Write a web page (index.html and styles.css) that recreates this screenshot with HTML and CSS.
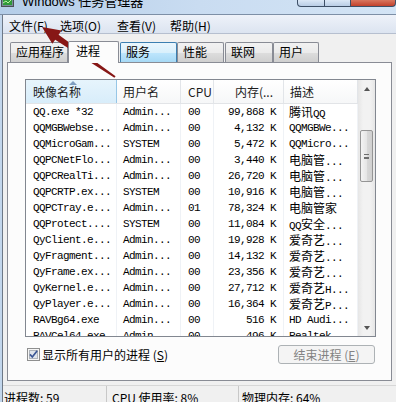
FILE: index.html
```html
<!DOCTYPE html>
<html lang="zh-CN">
<head>
  <meta charset="UTF-8">
  <title>Windows 任务管理器</title>
  <link rel="stylesheet" href="styles.css">
</head>
<body>
  <div class="window">
    <div class="titlebar">
      <svg class="app-icon" width="14" height="8" viewBox="0 0 14 8">
        <rect x="0.5" y="-3.5" width="12" height="10" fill="#7a8a99" stroke="#4a4f55"/>
        <rect x="2" y="-2" width="9" height="7" fill="#2f9a3a"/>
        <path d="M2 3 L5 1 L7 3 L11 -1" stroke="#b8f0a0" fill="none"/>
      </svg>
      <span class="title">Windows 任务管理器</span>
      <div class="caption-buttons">
        <span class="cap-btn cap-min"></span>
        <span class="cap-btn cap-max"></span>
        <span class="cap-btn cap-close"></span>
      </div>
    </div>

    <div class="frame">
      <div class="inner">
        <div class="menubar">
          <span class="menu-item m1">文件(F)</span>
          <span class="menu-item m2">选项(O)</span>
          <span class="menu-item m3">查看(V)</span>
          <span class="menu-item">帮助(H)</span>
        </div>

        <div class="client">
          <div class="tabs">
            <div class="tab t-apps">应用程序</div>
            <div class="tab active t-proc">进程</div>
            <div class="tab hot t-svc">服务</div>
            <div class="tab t-perf">性能</div>
            <div class="tab t-net">联网</div>
            <div class="tab t-user">用户</div>
          </div>

          <div class="panel">
            <div class="listview">
              <div class="list-body">
                <div class="list-header">
                  <div class="hcell sorted">映像名称<span class="sort-arrow"></span></div>
                  <div class="hcell">用户名</div>
                  <div class="hcell">CPU</div>
                  <div class="hcell num">内存(...</div>
                  <div class="hcell">描述</div>
                </div>
                <div class="rows">
                  <div class="row"><span>QQ.exe *32</span><span>Admin...</span><span>00</span><span>99,868 K</span><span><span class="cn">腾讯</span>QQ</span></div>
                  <div class="row"><span>QQMGBWebse...</span><span>Admin...</span><span>00</span><span>4,132 K</span><span>QQMGBWe...</span></div>
                  <div class="row"><span>QQMicroGam...</span><span>SYSTEM</span><span>00</span><span>5,472 K</span><span>QQMicro...</span></div>
                  <div class="row"><span>QQPCNetFlo...</span><span>Admin...</span><span>00</span><span>3,440 K</span><span><span class="cn">电脑管</span>...</span></div>
                  <div class="row"><span>QQPCRealTi...</span><span>Admin...</span><span>00</span><span>26,720 K</span><span><span class="cn">电脑管</span>...</span></div>
                  <div class="row"><span>QQPCRTP.ex...</span><span>SYSTEM</span><span>00</span><span>10,916 K</span><span><span class="cn">电脑管</span>...</span></div>
                  <div class="row"><span>QQPCTray.e...</span><span>Admin...</span><span>01</span><span>78,324 K</span><span><span class="cn">电脑管家</span></span></div>
                  <div class="row"><span>QQProtect....</span><span>SYSTEM</span><span>00</span><span>11,084 K</span><span>QQ<span class="cn">安全</span>...</span></div>
                  <div class="row"><span>QyClient.e...</span><span>Admin...</span><span>00</span><span>19,928 K</span><span><span class="cn">爱奇艺</span>...</span></div>
                  <div class="row"><span>QyFragment...</span><span>Admin...</span><span>00</span><span>14,132 K</span><span><span class="cn">爱奇艺</span>...</span></div>
                  <div class="row"><span>QyFrame.ex...</span><span>Admin...</span><span>00</span><span>23,356 K</span><span><span class="cn">爱奇艺</span>...</span></div>
                  <div class="row"><span>QyKernel.e...</span><span>Admin...</span><span>00</span><span>27,712 K</span><span><span class="cn">爱奇艺</span>H...</span></div>
                  <div class="row"><span>QyPlayer.e...</span><span>Admin...</span><span>00</span><span>16,364 K</span><span><span class="cn">爱奇艺</span>P...</span></div>
                  <div class="row"><span>RAVBg64.exe</span><span>Admin...</span><span>00</span><span>516 K</span><span>HD Audi...</span></div>
                  <div class="row"><span>RAVCel64.exe</span><span>Admin...</span><span>00</span><span>496 K</span><span>Realtek...</span></div>
                </div>
              </div>
              <div class="scrollbar">
                <div class="sb-btn"><span class="arr-up"></span></div>
                <div class="sb-track">
                  <div class="sb-thumb"><span class="grip"></span></div>
                </div>
                <div class="sb-btn"><span class="arr-down"></span></div>
              </div>
            </div>

            <div class="panel-foot">
              <label class="show-all">
                <svg width="13" height="13" viewBox="0 0 13 13">
                  <rect x="0.5" y="0.5" width="12" height="12" fill="#f6f6f6" stroke="#8e8f8f"/>
                  <rect x="2.5" y="2.5" width="8" height="8" fill="#dfe5ec" stroke="#aeb4bb"/>
                  <path d="M3 6.4 L5.3 9 L10.2 2.8" fill="none" stroke="#3b5795" stroke-width="1.7"/>
                </svg>
                <span>显示所有用户的进程 (<u>S</u>)</span>
              </label>
              <button class="end-btn" disabled>结束进程 (<u>E</u>)</button>
            </div>
          </div>
        </div>

        <div class="statusbar">
          <div class="pane p1">进程数: 59</div>
          <div class="pane p2">CPU 使用率: 8%</div>
          <div class="pane p3">物理内存: 64%</div>
        </div>
      </div>
    </div>

    <svg class="pointer-arrow" width="130" height="90" viewBox="0 0 130 90">
      <polygon points="42,27 61.4,30.6 58.6,34.7 115.6,76.2 114.4,77.8 55.2,39.7 52.3,43.8" fill="#871716"/>
    </svg>
  </div>
</body>
</html>
```

FILE: styles.css
```css
body {
  margin: 0;
  font-family: "Noto Sans CJK SC", "Liberation Sans", sans-serif;
  font-size: 12px;
  color: #000;
}

.window {
  position: relative;
  width: 396px;
  height: 402px;
  overflow: hidden;
  background: #c2d6ec;
}

/* title bar */
.titlebar {
  height: 14px;
  display: flex;
  align-items: flex-start;
  background: linear-gradient(to right, #b4cde8, #c9dcf1 50%, #d3e4f5);
  border-bottom: 1px solid #7d8fa6;
}

.app-icon {
  margin: 0 7px 0 1px;
  flex: none;
}

.title {
  font-family: "Liberation Sans", "Noto Sans CJK SC", sans-serif;
  font-size: 13px;
  line-height: 16px;
  margin-top: -6px;
  white-space: nowrap;
}

.caption-buttons {
  margin-left: auto;
  display: flex;
  height: 7px;
}

.cap-btn {
  display: block;
  height: 7px;
  box-sizing: border-box;
  border: 1px solid #3d4f66;
  border-top: none;
}

.cap-min {
  width: 28px;
  border-radius: 0 0 0 4px;
  background: linear-gradient(#dbe8f6, #b9cde5);
}

.cap-max {
  width: 26px;
  border-left: none;
  background: linear-gradient(#dbe8f6, #b9cde5);
}

.cap-close {
  width: 45px;
  border-left: none;
  border-radius: 0 0 4px 0;
  background: linear-gradient(#d8765f, #c2412c);
}

/* frame */
.frame {
  padding-left: 2px;
}

.inner {
  border-left: 1px solid #6d7886;
  background: #f0f0f0;
  height: 387px;
}

.menubar {
  height: 19px;
  box-sizing: border-box;
  padding: 3px 0 0 6px;
  display: flex;
  line-height: 16px;
  background: linear-gradient(#eef2f9, #dce4f0);
  border-bottom: 1px solid #b6bfcf;
}

.menu-item { white-space: nowrap; }
.m1 { width: 51px; }
.m2 { width: 57px; }
.m3 { width: 53px; }

/* tabs */
.client {
  height: 351px;
  box-sizing: border-box;
  padding: 7px 0 0 4px;
}

.tabs {
  display: flex;
  align-items: flex-end;
  height: 22px;
  margin: 0 0 -1px 3px;
}

.tab {
  height: 20px;
  margin-bottom: 1px;
  box-sizing: border-box;
  padding-left: 5px;
  line-height: 18px;
  border: 1px solid #898c95;
  border-bottom: none;
  border-radius: 2px 2px 0 0;
  background: linear-gradient(#f2f2f2, #ebebeb 50%, #dddddd 51%, #cfcfcf);
  white-space: nowrap;
}

.tab.active {
  position: relative;
  z-index: 1;
  height: 22px;
  margin-bottom: 0;
  padding-left: 7px;
  background: #fcfcfc;
}

.tab.hot {
  border-color: #3c7fb1;
  background: linear-gradient(#eaf6fd, #d9f0fc 50%, #bee6fd 51%, #a7d9f5);
}

.t-apps { width: 58px; }
.t-proc { width: 51px; }
.t-svc { width: 57px; margin-left: 1px; }
.t-perf { width: 47px; }
.t-net { width: 48px; margin-left: 1px; }
.t-user { width: 46px; }

.panel {
  width: 385px;
  height: 319px;
  box-sizing: border-box;
  padding: 16px 0 0 17px;
  border: 1px solid #898c95;
  background: #fcfcfc;
}

/* list view */
.listview {
  width: 351px;
  height: 258px;
  box-sizing: border-box;
  border: 1px solid #828790;
  background: #fff;
  display: flex;
}

.list-body {
  width: 332px;
  overflow: hidden;
}

.list-header,
.row {
  display: grid;
  grid-template-columns: 91px 64px 33px 70px 74px;
}

.list-header {
  height: 24px;
  box-sizing: border-box;
  border-bottom: 1px solid #e2e4e7;
}

.hcell {
  position: relative;
  line-height: 23px;
  padding-left: 6px;
  border-right: 1px solid #e2e5e9;
  background: linear-gradient(#ffffff, #f6f7f8);
  color: #1b1b1b;
  white-space: nowrap;
}

.hcell:nth-child(1),
.hcell:nth-child(3) { padding-left: 7px; }

.hcell.num {
  text-align: right;
  padding: 0 10px 0 0;
}

.hcell.sorted {
  background: linear-gradient(#e6f4fc, #d8edfa);
  border-right-color: #96c6e6;
}

.sort-arrow {
  position: absolute;
  top: 1px;
  left: 43px;
  width: 0;
  height: 0;
  border-left: 4px solid transparent;
  border-right: 4px solid transparent;
  border-bottom: 4px solid #7f9ec0;
}

.row {
  height: 16px;
  line-height: 16px;
  font-family: "Liberation Mono", "Noto Sans CJK SC", monospace;
  font-size: 11px;
  letter-spacing: -0.6px;
  white-space: nowrap;
}

.row > span {
  overflow: hidden;
  padding-left: 7px;
  border-right: 1px solid #eff2f6;
}

.row > span:nth-child(2) { padding-left: 6px; }
.row > span:nth-child(4) { padding: 0 7px 0 0; text-align: right; }
.row > span:nth-child(5) { padding-left: 5px; }

.cn {
  font-family: "Noto Sans CJK SC", sans-serif;
  font-size: 12px;
  letter-spacing: 0;
}

/* scrollbar */
.scrollbar {
  width: 17px;
  display: flex;
  flex-direction: column;
  background: linear-gradient(to right, #e6e6e6, #f2f2f2 30%, #f2f2f2 70%, #e6e6e6);
}

.sb-btn {
  height: 17px;
  display: flex;
  align-items: center;
  justify-content: center;
}

.arr-up,
.arr-down {
  width: 0;
  height: 0;
  border-left: 3.5px solid transparent;
  border-right: 3.5px solid transparent;
}

.arr-up { border-bottom: 4px solid #555; }
.arr-down { border-top: 4px solid #555; }

.sb-track {
  flex: 1;
}

.sb-thumb {
  width: 13px;
  height: 52px;
  margin: 33px 0 0 2px;
  box-sizing: border-box;
  border: 1px solid #959595;
  border-radius: 2px;
  background: linear-gradient(to right, #f4f4f4, #e6e6e6 50%, #d9d9d9 51%, #d0d0d0);
  display: flex;
  align-items: center;
  justify-content: center;
}

.grip {
  width: 5px;
  height: 5px;
  border-top: 1px solid #6e6e6e;
  border-bottom: 1px solid #6e6e6e;
  background: linear-gradient(transparent 2px, #6e6e6e 2px, #6e6e6e 3px, transparent 3px);
  box-sizing: border-box;
}

/* footer */
.panel-foot {
  width: 351px;
  height: 19px;
  margin-top: 8px;
  display: flex;
  align-items: center;
  justify-content: space-between;
}

.show-all {
  display: flex;
  align-items: center;
  gap: 2px;
  margin-left: 2px;
  white-space: nowrap;
}

.end-btn {
  width: 97px;
  height: 19px;
  margin-right: 1px;
  padding: 0;
  box-sizing: border-box;
  border: 1px solid #adb2b5;
  border-radius: 3px;
  background: #f4f4f4;
  color: #838383;
  font-family: inherit;
  font-size: 12px;
  line-height: 17px;
}

/* status bar */
.statusbar {
  height: 17px;
  box-sizing: border-box;
  border-top: 1px solid #d7d7d7;
  display: flex;
  line-height: 17px;
  white-space: nowrap;
}

.pane {
  box-sizing: border-box;
  padding-top: 3px;
}

.p1 { width: 104px; padding-left: 1px; border-right: 1px solid #c8c8c8; }
.p2 { width: 132px; padding-left: 5px; border-right: 1px solid #c8c8c8; }
.p3 { padding-left: 3px; }

.pointer-arrow {
  position: absolute;
  left: 0;
  top: 0;
  pointer-events: none;
}
```
